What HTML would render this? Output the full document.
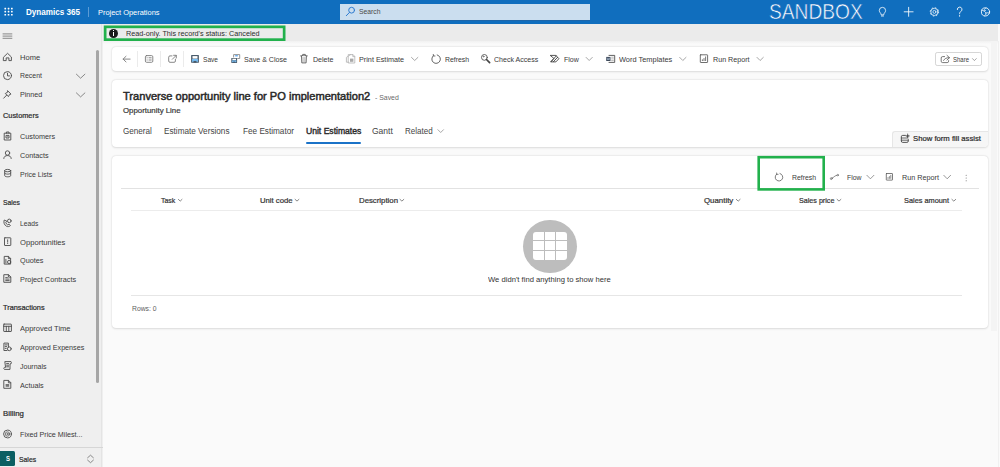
<!DOCTYPE html>
<html><head><meta charset="utf-8">
<style>
*{box-sizing:border-box;margin:0;padding:0}
html,body{width:1000px;height:467px;overflow:hidden;background:#fafafa;font-family:"Liberation Sans",sans-serif}
.t{position:absolute;white-space:nowrap;line-height:12px;transform-origin:0 0}
.a{position:absolute}
.card{position:absolute;background:#fff;border-radius:4px;box-shadow:0 0 1.6px rgba(0,0,0,.10),0 0.9px 2.2px rgba(0,0,0,.11)}
svg{position:absolute;overflow:visible}
</style></head><body>
<!-- top bar -->
<div class="a" style="left:0;top:0;width:1000px;height:24.4px;background:#106ebe"></div>
<div class="a" style="left:88px;top:6.5px;width:1px;height:10.5px;background:#5b9bd5"></div>
<div class="a" style="left:339.8px;top:3.7px;width:250.3px;height:16.2px;background:#cbdeef;box-shadow:0 0.5px 0 #2b5f94"></div>
<!-- sidebar -->
<div class="a" style="left:0;top:24.4px;width:102.5px;height:443px;background:#efefef"></div>
<div class="a" style="left:96px;top:49.9px;width:3px;height:333.1px;background:#a6a6a6;border-radius:1.5px"></div>
<div class="a" style="left:101.3px;top:24.4px;width:1.2px;height:443px;background:linear-gradient(90deg,#ececec,#dcdcdc)"></div>
<div class="a" style="left:0;top:447px;width:102.5px;height:0.9px;background:#d6d6d6"></div>
<div class="a" style="left:0;top:451.3px;width:15px;height:14.4px;background:#0b5f62;border-radius:0 1.5px 1.5px 0"></div>
<!-- notification bar -->
<div class="a" style="left:102.5px;top:24.4px;width:895.8px;height:17px;background:#ebebeb"></div>
<div class="a" style="left:102.5px;top:41.4px;width:895.8px;height:3px;background:linear-gradient(#f1f1f1,#fafafa)"></div>
<div class="a" style="left:109px;top:28.5px;width:9px;height:9px;border-radius:50%;background:#1b1b1b"></div>
<div class="a" style="left:113px;top:30.3px;width:1px;height:1.1px;background:#fff"></div>
<div class="a" style="left:113px;top:32.2px;width:1px;height:3.6px;background:#fff"></div>
<!-- right strip -->
<div class="a" style="left:990.5px;top:41.4px;width:6.5px;height:290px;background:#f4f4f4"></div>
<div class="a" style="left:998px;top:41.4px;width:0.8px;height:426px;background:#f0f0f0"></div>
<!-- cards -->
<div class="card" style="left:111.6px;top:46.9px;width:876.4px;height:24.1px"></div>
<div class="card" style="left:111.6px;top:80.2px;width:876.4px;height:66.8px"></div>
<div class="card" style="left:111.6px;top:155.8px;width:876.4px;height:172.6px"></div>
<!-- command bar separators -->
<div class="a" style="left:137px;top:50.8px;width:0.8px;height:16.2px;background:#ebebeb"></div>
<div class="a" style="left:160.3px;top:50.8px;width:0.8px;height:16.2px;background:#ebebeb"></div>
<div class="a" style="left:183.4px;top:50.8px;width:0.8px;height:16.2px;background:#ebebeb"></div>
<!-- share button -->
<div class="a" style="left:935.2px;top:52px;width:47px;height:13.8px;border:0.8px solid #d6d6d6;border-radius:2.2px;background:#fff"></div>
<!-- tab underline -->
<div class="a" style="left:306.1px;top:142.3px;width:55.3px;height:1.7px;background:#1a72c7;border-radius:1px"></div>
<!-- form fill assist button -->
<div class="a" style="left:892px;top:130.6px;width:96px;height:16.2px;background:#f6f6f6;border:0.8px solid #e6e6e6;border-right:none;border-bottom:none;border-radius:3px 0 4px 0"></div>
<!-- grid lines -->
<div class="a" style="left:121.3px;top:188.1px;width:857.3px;height:0.9px;background:#e2e2e2"></div>
<div class="a" style="left:131.3px;top:210.1px;width:830.7px;height:0.9px;background:#ececec"></div>
<div class="a" style="left:131.3px;top:295px;width:830.7px;height:0.9px;background:#e6e6e6"></div>
<!-- refresh highlight -->

<!-- empty state -->
<div class="a" style="left:523.2px;top:220px;width:53.4px;height:53.4px;border-radius:50%;background:#bdbdbd"></div>
<div class="a" style="left:532.7px;top:231.8px;width:34.6px;height:28.3px;border-radius:3px;background:#fff"></div>
<div class="a" style="left:543.6px;top:231.8px;width:1px;height:28.3px;background:#bdbdbd"></div>
<div class="a" style="left:555.4px;top:231.8px;width:1px;height:28.3px;background:#bdbdbd"></div>
<div class="a" style="left:532.7px;top:240.4px;width:34.6px;height:1px;background:#bdbdbd"></div>
<div class="a" style="left:532.7px;top:249.7px;width:34.6px;height:1px;background:#bdbdbd"></div>
<svg width="1000" height="467" style="left:0;top:0"><rect x="105.15" y="26.85" width="179" height="12.8" fill="none" stroke="#22b14c" stroke-width="2.7"/><rect x="758.7" y="157.2" width="65" height="32.2" fill="none" stroke="#22b14c" stroke-width="2.6"/></svg>

<svg width="1000" height="467" viewBox="0 0 1000 467" style="left:0;top:0" fill="none" stroke-linecap="round" stroke-linejoin="round">
<!-- ===== top bar ===== -->
<g fill="#fff" stroke="none">
 <rect x="4.4" y="7.7" width="1.7" height="1.7" rx=".4"/><rect x="7.7" y="7.7" width="1.7" height="1.7" rx=".4"/><rect x="11" y="7.7" width="1.7" height="1.7" rx=".4"/>
 <rect x="4.4" y="10.8" width="1.7" height="1.7" rx=".4"/><rect x="7.7" y="10.8" width="1.7" height="1.7" rx=".4"/><rect x="11" y="10.8" width="1.7" height="1.7" rx=".4"/>
 <rect x="4.4" y="13.9" width="1.7" height="1.7" rx=".4"/><rect x="7.7" y="13.9" width="1.7" height="1.7" rx=".4"/><rect x="11" y="13.9" width="1.7" height="1.7" rx=".4"/>
</g>
<!-- search magnifier -->
<g stroke="#2f7cd0" stroke-width="1">
 <circle cx="351.6" cy="10.2" r="2.9"/><path d="M349.4 12.5 L346.3 15.7"/>
</g>
<g stroke="#fff" stroke-width="0.85">
 <!-- lightbulb -->
 <path d="M881.2 14.5 C881.2 13.1 879.3 12.5 879.3 10.5 A3.15 3.15 0 0 1 885.6 10.5 C885.6 12.5 883.7 13.1 883.7 14.5 Z" stroke-width=".8"/>
 <path d="M881.4 16 H883.5" stroke-width=".8"/>
 <!-- plus -->
 <path d="M904.2 11.8 H913.1 M908.65 7.3 V16.3"/>
 <!-- gear -->
 <circle cx="934.4" cy="11.9" r="3.6" stroke-width="0.75"/>
 <circle cx="934.4" cy="11.9" r="4.2" stroke-width="0.8" stroke-dasharray="1.5 1.8" stroke-linecap="butt"/>
 <circle cx="934.4" cy="11.9" r="1.5" stroke-width="0.7"/>
 <!-- question -->
 <path d="M957.3 9.6 A2.35 2.35 0 1 1 960.6 11.6 C959.8 12.2 959.6 12.7 959.6 13.8"/>
 <path d="M959.6 15.6 V16.2" stroke-width="1"/>
 <!-- copilot-ish -->
 <circle cx="985.5" cy="11.9" r="4.1"/>
 <path d="M985.9 7.9 C983.6 9.6 983.6 11 985.1 12 C986.8 13.2 986.4 14.6 984.6 15.9 M982 10.3 C983.4 11.2 984.6 11.2 985.6 10.6 M989.3 13.2 C987.8 12.4 986.6 12.6 985.7 13.2" stroke-width="0.7"/>
</g>
<!-- ===== sidebar ===== -->
<g stroke="#666" stroke-width="0.75">
 <path d="M3 33.9 H11.9 M3 36.1 H11.9 M3 38.3 H11.9"/>
</g>
<g stroke="#4d4d4d" stroke-width="0.92">
 <!-- home -->
 <path d="M3.7 57 L7.55 53.3 L11.4 57 V60.6 H8.9 V57.9 H6.2 V60.6 H3.7 Z"/>
 <!-- recent clock -->
 <circle cx="7.5" cy="75.6" r="4"/><path d="M7.5 73.2 V75.9 H9.5"/>
 <!-- pin -->
 <path d="M7.8 90.9 L11 94.1 L9.6 94.5 L8.4 96.6 L5.3 93.5 L7.4 92.3 Z M6.7 95.1 L3.7 98.2"/>
 <!-- chevrons -->
 <path d="M76.4 74.2 L80.6 78.2 L84.9 74.2" stroke="#666" stroke-width="0.75"/>
 <path d="M76.4 92.9 L80.6 96.9 L84.9 92.9" stroke="#666" stroke-width="0.75"/>
 <!-- customers (clipboard/building) -->
 <path d="M4.6 133.2 H10.8 V140 H4.6 Z M6.4 133.2 V132 H9 V133.2"/><rect x="6.4" y="135.4" width="2.6" height="2.6"/><path d="M7.7 136.7 h.1"/>
 <!-- contacts -->
 <circle cx="7.5" cy="153" r="2.2"/><path d="M3.8 158.5 C4 156.3 5.5 155.6 7.5 155.6 C9.5 155.6 11 156.3 11.2 158.5"/>
 <!-- price lists (db cylinder) -->
 <ellipse cx="7.7" cy="170.6" rx="3" ry="1.2"/><path d="M4.7 170.6 V175.6 C4.7 177.2 10.7 177.2 10.7 175.6 V170.6 M4.7 173.1 C4.7 174.6 10.7 174.6 10.7 173.1"/>
 <!-- leads -->
 <circle cx="9.3" cy="220.9" r="1.8"/><path d="M4.1 220.4 C3.3 222.6 4.4 225.1 6.6 226.3 C7.8 226.9 9.4 226.6 10.4 225.6 L9 224.1 L7.7 224.9 C6.7 224.4 6 223.5 5.8 222.5 L6.6 221.5 Z"/>
 <!-- opportunities -->
 <rect x="4.5" y="237.8" width="6.3" height="7.7" rx=".4"/><path d="M7.65 239.8 V242.2 M7.65 243.4 v.1"/>
 <!-- quotes -->
 <path d="M4.6 256.4 H8.6 L10.6 258.4 V264.1 H4.6 Z M8.4 256.6 V258.6 H10.4"/><circle cx="9.1" cy="262" r="1.6"/><path d="M5.9 259.3 V263"/>
 <!-- project contracts -->
 <path d="M4.2 274.7 H8.6 L10.8 276.9 V282.3 H4.2 Z M8.4 274.9 V277.1 H10.6 M5.7 277.6 H7.4 M5.7 279.1 H9.2 M5.7 280.6 H9.2"/>
 <!-- approved time (calendar/table) -->
 <rect x="3.7" y="324.1" width="7.7" height="7.4" rx=".4"/><path d="M3.7 326.3 H11.4 M6.3 326.3 V331.5 M8.8 326.3 V331.5"/>
 <!-- approved expenses -->
 <path d="M8.4 347 V343.1 H3.9 V350.5 H7"/><path d="M5.2 344.9 H7.2 M5.2 346.6 H6.6 M5.2 348.4 H6.2"/><circle cx="9.3" cy="348.8" r="1.9"/>
 <!-- journals -->
 <path d="M5.2 361.6 H11 C11.6 362.3 11.6 363.3 11 363.8 H10 V369.4 H4.4 C3.6 368.9 3.6 368 4.4 367.4 H5.2 Z M6.6 363.6 H8.6 M6.6 365.2 H8.6 M6.6 366.8 H8.6"/>
 <!-- actuals -->
 <path d="M4.2 380.4 H8.6 L10.8 382.6 V388.3 H4.2 Z M8.4 380.6 V382.8 H10.6"/><rect x="5.6" y="384" width="3.6" height="2.8" fill="#777" stroke="none"/>
 <!-- fixed price (target) -->
 <circle cx="7.5" cy="434" r="3.9"/><circle cx="7.5" cy="434" r="2.2" stroke-width=".7"/><circle cx="7.5" cy="434" r=".7" stroke-width=".7"/>
 <!-- area switcher chevrons -->
 <path d="M87.6 457.8 L90.5 455.2 L93.4 457.8 M87.6 460.1 L90.5 462.7 L93.4 460.1" stroke="#666" stroke-width=".75"/>
</g>
<!-- ===== command bar ===== -->
<g stroke="#7a7a7a" stroke-width="0.9">
 <path d="M130.1 59.1 H123.1 M126 56.3 L123.1 59.1 L126 61.9"/>
 <rect x="145.4" y="55.6" width="7.4" height="6.7" rx="1.2"/><path d="M149 57.8 H151.2 M149 60 H151.2 M147 57.8 h.2 M147 60 h.2"/>
 <path d="M172 55.9 H170 A1.3 1.3 0 0 0 168.7 57.2 V61 A1.3 1.3 0 0 0 170 62.3 H174.1 A1.3 1.3 0 0 0 175.4 61 V59.2 M173.6 55.3 H176.3 V58 M176.2 55.4 L172.3 59.3"/>
</g>
<!-- save -->
<g>
 <rect x="191.1" y="55.1" width="7.8" height="7.7" rx=".5" fill="#4a5b6b"/>
 <rect x="192.5" y="56.1" width="5" height="2.5" fill="#fff"/>
 <rect x="192.1" y="59" width="5.8" height="2.9" fill="#78bff5"/>
 <rect x="193.5" y="60.9" width="3" height="1.9" fill="#4a5b6b"/>
 <!-- save & close -->
 <path d="M233.6 57 V54.6 H239.7 V58.5 H237.8" stroke="#7a7a7a" stroke-width="0.8"/>
 <rect x="235.2" y="55.2" width="2.6" height="1.2" fill="#4a9be8"/>
 <rect x="231.3" y="58" width="5.8" height="4.9" rx=".4" fill="#4a5b6b"/>
 <rect x="232.4" y="58.7" width="3.6" height="1.4" fill="#fff"/>
 <rect x="232.1" y="60.4" width="4.2" height="1.8" fill="#78bff5"/>
 <rect x="233.2" y="61.6" width="2" height="1.3" fill="#4a5b6b"/>
</g>
<!-- delete -->
<g stroke="#555" stroke-width="0.85">
 <path d="M300.6 55.9 H307.3 M302.7 55.7 V54.4 H305.3 V55.7"/>
 <path d="M301.5 56.1 L301.8 62.9 H306.1 L306.4 56.1" fill="#f2f2f2"/>
 <path d="M303.1 57.5 V61.6 M304.8 57.5 V61.6" stroke="#999" stroke-width=".6"/>
</g>
<!-- print estimate (disabled look) -->
<g stroke="#b5b5b5" stroke-width="0.85">
 <path d="M348.6 54.6 H353 L354.8 56.4 V63 H348.6 Z M352.8 54.8 V56.6 H354.6"/>
 <path d="M350.6 54.6 L346.4 57.4 V62.2 H348.6"/>
 <rect x="350" y="58.6" width="3.4" height="3.2" fill="#a9a9a9" stroke="none"/>
</g>
<!-- refresh -->
<g stroke="#555" stroke-width="0.9">
 <path d="M437.2 54.9 A4.3 4.3 0 1 1 433.4 55.7"/><path d="M433.3 54.4 L433.4 56 L435 56" stroke-width=".8"/>
</g>
<!-- check access (key) -->
<g stroke="#555" stroke-width="0.9">
 <circle cx="484.4" cy="57.4" r="2.9"/><path d="M486.5 59.5 L489.6 62.6" stroke-width="1.7" stroke="#444"/><circle cx="483.6" cy="56.6" r=".5" stroke-width=".6"/>
</g>
<!-- flow -->
<g stroke="#3a3a3a" stroke-width="0.85">
 <path d="M550.6 55.4 H555.9 L558.9 58.7 L555.9 61.9 H550.6 L553.6 58.7 Z M553.4 61.7 L557.6 57.3 M551.2 61.7 L556.3 55.8"/>
</g>
<!-- word templates -->
<g stroke="#444" stroke-width="0.85">
 <path d="M609 55.4 H614.7 V62.4 H609"/><path d="M611.6 57.2 H613.4 M611.6 58.9 H613.4 M611.6 60.6 H613.4" stroke="#888" stroke-width=".6"/>
 <rect x="606.2" y="56.9" width="4.3" height="4.1" fill="#3f4b5c" stroke="none"/><path d="M607.2 58.1 L607.8 59.9 L608.4 58.5 L609 59.9 L609.6 58.1" stroke="#cfe3f7" stroke-width=".5"/>
</g>
<!-- run report -->
<g stroke="#555" stroke-width="0.85">
 <rect x="700.3" y="54.8" width="7.3" height="7.7" rx=".4"/><path d="M702.4 59.4 V61 M704 58.1 V61 M705.6 56.5 V61" stroke-width=".8" stroke-linecap="butt"/>
</g>
<!-- chevrons cmdbar -->
<g stroke="#8a8a8a" stroke-width="0.75">
 <path d="M411.5 57.4 L414.7 60.5 L417.9 57.4"/>
 <path d="M586.1 57.4 L589.2 60.5 L592.3 57.4"/>
 <path d="M679.7 57.4 L682.8 60.5 L686 57.4"/>
 <path d="M757 57.4 L760.1 60.5 L763.3 57.4"/>
 <path d="M972.5 58.6 L974.4 60.6 L976.3 58.6" stroke="#777" stroke-width=".65"/>
</g>
<!-- share icon -->
<g stroke="#555" stroke-width="0.8">
 <path d="M944.6 56.6 H942.6 A1.4 1.4 0 0 0 941.2 58 V61.2 A1.4 1.4 0 0 0 942.6 62.6 H947.2 A1.4 1.4 0 0 0 948.6 61.2 V60.6"/>
 <path d="M947 55.4 L949.5 57.7 L947 60 M949.3 57.7 C946.4 57.5 944.6 58.6 943.6 60.4"/>
</g>
<!-- related chevron -->
<path d="M437.9 129.7 L440.7 132.5 L443.5 129.7" stroke="#8a8a8a" stroke-width=".75"/>
<!-- form fill assist icon -->
<g stroke="#3a3a3a" stroke-width="0.85">
 <path d="M905.4 135.4 H902.7 A1.4 1.4 0 0 0 901.3 136.8 V141 A1.4 1.4 0 0 0 902.7 142.4 H906.9 A1.4 1.4 0 0 0 908.3 141 V139.6"/>
 <path d="M901.5 138 H908 M901.5 140.2 H908" stroke-width=".75"/>
 <path d="M907.7 133.9 L908.2 135.4 L909.7 135.9 L908.2 136.4 L907.7 137.9 L907.2 136.4 L905.7 135.9 L907.2 135.4 Z" fill="#3a3a3a" stroke-width=".3"/>
</g>
<!-- ===== grid toolbar ===== -->
<g stroke="#5a5a5a" stroke-width="0.8">
 <path d="M780 173.5 A3.8 3.8 0 1 1 776.7 174.1"/><path d="M776.6 173 L776.7 174.4 L778.1 174.4" stroke-width=".7"/>
 <circle cx="831.3" cy="178.6" r=".95" stroke-width=".65"/><path d="M832.2 178 C834 177.6 834.2 175.8 836.6 175.4" stroke-width=".7"/><circle cx="837.7" cy="175.1" r=".75" stroke-width=".6"/>
 <rect x="886.3" y="173.5" width="6.2" height="6.6" rx=".3"/><path d="M888 177.2 V178.8 M889.4 176.2 V178.8 M890.8 174.9 V178.8" stroke-width=".7" stroke-linecap="butt"/>
 <path d="M866.9 175.3 L870.4 178.8 L873.9 175.3" stroke="#777" stroke-width=".75"/>
 <path d="M943.8 175.3 L947.2 178.8 L950.6 175.3" stroke="#777" stroke-width=".75"/>
</g>
<g fill="#777" stroke="none"><circle cx="966.2" cy="175.2" r=".55"/><circle cx="966.2" cy="178" r=".55"/><circle cx="966.2" cy="180.8" r=".55"/></g>
<!-- header sort chevrons -->
<g stroke="#555" stroke-width=".7">
 <path d="M178.4 199.4 L180.2 201.1 L182 199.4"/>
 <path d="M295.1 199.4 L297 201.1 L298.9 199.4"/>
 <path d="M400 199.4 L401.9 201.1 L403.8 199.4"/>
 <path d="M736.3 199.4 L738.2 201.1 L740.1 199.4"/>
 <path d="M837.1 199.4 L839 201.1 L840.9 199.4"/>
 <path d="M951.9 199.4 L953.8 201.1 L955.7 199.4"/>
</g>
</svg>

<div class="t" style="left:25.80px;top:6.00px;font-size:8.5px;font-weight:bold;color:#fff;transform:scaleX(0.9541);">Dynamics 365</div>
<div class="t" style="left:97.80px;top:7.00px;font-size:7.5px;font-weight:normal;color:#fff;transform:scaleX(0.9899);">Project Operations</div>
<div class="t" style="left:358.50px;top:6.00px;font-size:7.5px;font-weight:normal;color:#4a4a4a;transform:scaleX(0.9047);">Search</div>
<div class="t" style="left:769.30px;top:6.00px;font-size:21.6px;font-weight:normal;color:#fff;transform:scaleX(0.8872);-webkit-text-stroke:0.55px #106ebe;">SANDBOX</div>
<div class="t" style="left:126.40px;top:28.00px;font-size:7.4px;font-weight:normal;color:#2b2b2b;transform:scaleX(0.9802);">Read-only. This record&#x27;s status: Canceled</div>
<div class="t" style="left:203.10px;top:54.00px;font-size:7.5px;font-weight:normal;color:#3a3a3a;transform:scaleX(0.8767);">Save</div>
<div class="t" style="left:243.70px;top:54.00px;font-size:7.5px;font-weight:normal;color:#3a3a3a;transform:scaleX(0.9460);">Save &amp; Close</div>
<div class="t" style="left:312.60px;top:54.00px;font-size:7.5px;font-weight:normal;color:#3a3a3a;transform:scaleX(0.9406);">Delete</div>
<div class="t" style="left:358.70px;top:54.00px;font-size:7.5px;font-weight:normal;color:#3a3a3a;transform:scaleX(0.9660);">Print Estimate</div>
<div class="t" style="left:444.60px;top:54.00px;font-size:7.5px;font-weight:normal;color:#3a3a3a;transform:scaleX(0.9175);">Refresh</div>
<div class="t" style="left:493.80px;top:54.00px;font-size:7.5px;font-weight:normal;color:#3a3a3a;transform:scaleX(0.9382);">Check Access</div>
<div class="t" style="left:563.50px;top:54.00px;font-size:7.5px;font-weight:normal;color:#3a3a3a;transform:scaleX(0.9341);">Flow</div>
<div class="t" style="left:618.70px;top:54.00px;font-size:7.5px;font-weight:normal;color:#3a3a3a;transform:scaleX(0.9885);">Word Templates</div>
<div class="t" style="left:712.60px;top:54.00px;font-size:7.5px;font-weight:normal;color:#3a3a3a;transform:scaleX(0.9541);">Run Report</div>
<div class="t" style="left:952.80px;top:54.00px;font-size:6.9px;font-weight:normal;color:#3a3a3a;transform:scaleX(0.8700);">Share</div>
<div class="t" style="left:123.30px;top:90.00px;font-size:10.9px;font-weight:normal;color:#2a2a2a;transform:scaleX(1.0179);-webkit-text-stroke:0.49px #2a2a2a;">Tranverse opportunity line for PO implementation2</div>
<div class="t" style="left:375.10px;top:92.00px;font-size:7.3px;font-weight:normal;color:#6a6a6a;transform:scaleX(0.9461);">- Saved</div>
<div class="t" style="left:123.00px;top:105.00px;font-size:7.3px;font-weight:normal;color:#3a3a3a;transform:scaleX(1.0757);-webkit-text-stroke:0.2px #3a3a3a;">Opportunity Line</div>
<div class="t" style="left:123.30px;top:125.00px;font-size:8.4px;font-weight:normal;color:#444;transform:scaleX(0.9699);">General</div>
<div class="t" style="left:164.40px;top:125.00px;font-size:8.4px;font-weight:normal;color:#444;transform:scaleX(0.9772);">Estimate Versions</div>
<div class="t" style="left:242.70px;top:125.00px;font-size:8.4px;font-weight:normal;color:#444;transform:scaleX(0.9781);">Fee Estimator</div>
<div class="t" style="left:306.10px;top:125.00px;font-size:8.4px;font-weight:normal;color:#2a2a2a;transform:scaleX(1.0241);-webkit-text-stroke:0.38px #2a2a2a;">Unit Estimates</div>
<div class="t" style="left:372.40px;top:125.00px;font-size:8.4px;font-weight:normal;color:#444;transform:scaleX(1.0154);">Gantt</div>
<div class="t" style="left:404.70px;top:125.00px;font-size:8.4px;font-weight:normal;color:#444;transform:scaleX(0.9558);">Related</div>
<div class="t" style="left:913.20px;top:133.00px;font-size:7.3px;font-weight:normal;color:#2a2a2a;transform:scaleX(1.0545);-webkit-text-stroke:0.2px #2a2a2a;">Show form fill assist</div>
<div class="t" style="left:791.80px;top:172.00px;font-size:7.4px;font-weight:normal;color:#3a3a3a;transform:scaleX(0.9308);">Refresh</div>
<div class="t" style="left:847.10px;top:172.00px;font-size:7.4px;font-weight:normal;color:#3a3a3a;transform:scaleX(0.9289);">Flow</div>
<div class="t" style="left:901.80px;top:172.00px;font-size:7.4px;font-weight:normal;color:#3a3a3a;transform:scaleX(0.9789);">Run Report</div>
<div class="t" style="left:161.40px;top:195.00px;font-size:7.4px;font-weight:normal;color:#333;transform:scaleX(0.9406);-webkit-text-stroke:0.21px #333;">Task</div>
<div class="t" style="left:259.80px;top:195.00px;font-size:7.4px;font-weight:normal;color:#333;transform:scaleX(1.0437);-webkit-text-stroke:0.21px #333;">Unit code</div>
<div class="t" style="left:358.50px;top:195.00px;font-size:7.4px;font-weight:normal;color:#333;transform:scaleX(1.0549);-webkit-text-stroke:0.21px #333;">Description</div>
<div class="t" style="left:704.30px;top:195.00px;font-size:7.4px;font-weight:normal;color:#333;transform:scaleX(1.0642);-webkit-text-stroke:0.21px #333;">Quantity</div>
<div class="t" style="left:798.60px;top:195.00px;font-size:7.4px;font-weight:normal;color:#333;transform:scaleX(0.9682);-webkit-text-stroke:0.21px #333;">Sales price</div>
<div class="t" style="left:904.00px;top:195.00px;font-size:7.4px;font-weight:normal;color:#333;transform:scaleX(0.9955);-webkit-text-stroke:0.21px #333;">Sales amount</div>
<div class="t" style="left:488.30px;top:274.00px;font-size:7.3px;font-weight:normal;color:#333;transform:scaleX(1.0471);">We didn&#x27;t find anything to show here</div>
<div class="t" style="left:131.60px;top:303.00px;font-size:7.3px;font-weight:normal;color:#5e5e5e;transform:scaleX(0.9295);">Rows: 0</div>
<div class="t" style="left:19.70px;top:52.00px;font-size:7.5px;font-weight:normal;color:#3a3a3a;transform:scaleX(1.0042);">Home</div>
<div class="t" style="left:19.70px;top:70.00px;font-size:7.5px;font-weight:normal;color:#3a3a3a;transform:scaleX(0.9215);">Recent</div>
<div class="t" style="left:19.70px;top:89.00px;font-size:7.5px;font-weight:normal;color:#3a3a3a;transform:scaleX(0.9546);">Pinned</div>
<div class="t" style="left:19.70px;top:131.00px;font-size:7.5px;font-weight:normal;color:#3a3a3a;transform:scaleX(0.9679);">Customers</div>
<div class="t" style="left:19.70px;top:150.00px;font-size:7.5px;font-weight:normal;color:#3a3a3a;transform:scaleX(0.9659);">Contacts</div>
<div class="t" style="left:19.70px;top:169.00px;font-size:7.5px;font-weight:normal;color:#3a3a3a;transform:scaleX(0.9308);">Price Lists</div>
<div class="t" style="left:19.70px;top:218.00px;font-size:7.5px;font-weight:normal;color:#3a3a3a;transform:scaleX(0.8954);">Leads</div>
<div class="t" style="left:19.70px;top:237.00px;font-size:7.5px;font-weight:normal;color:#3a3a3a;transform:scaleX(1.0177);">Opportunities</div>
<div class="t" style="left:19.70px;top:255.00px;font-size:7.5px;font-weight:normal;color:#3a3a3a;transform:scaleX(0.9716);">Quotes</div>
<div class="t" style="left:19.70px;top:274.00px;font-size:7.5px;font-weight:normal;color:#3a3a3a;transform:scaleX(0.9769);">Project Contracts</div>
<div class="t" style="left:19.70px;top:323.00px;font-size:7.5px;font-weight:normal;color:#3a3a3a;transform:scaleX(1.0009);">Approved Time</div>
<div class="t" style="left:19.70px;top:342.00px;font-size:7.5px;font-weight:normal;color:#3a3a3a;transform:scaleX(0.9577);">Approved Expenses</div>
<div class="t" style="left:19.70px;top:361.00px;font-size:7.5px;font-weight:normal;color:#3a3a3a;transform:scaleX(0.9380);">Journals</div>
<div class="t" style="left:19.70px;top:380.00px;font-size:7.5px;font-weight:normal;color:#3a3a3a;transform:scaleX(0.9630);">Actuals</div>
<div class="t" style="left:19.70px;top:429.00px;font-size:7.5px;font-weight:normal;color:#3a3a3a;transform:scaleX(0.9551);">Fixed Price Milest...</div>
<div class="t" style="left:3.40px;top:110.00px;font-size:7.4px;font-weight:normal;color:#2a2a2a;transform:scaleX(0.9962);-webkit-text-stroke:0.21px #2a2a2a;">Customers</div>
<div class="t" style="left:3.40px;top:197.00px;font-size:7.4px;font-weight:normal;color:#2a2a2a;transform:scaleX(0.9081);-webkit-text-stroke:0.21px #2a2a2a;">Sales</div>
<div class="t" style="left:3.40px;top:302.00px;font-size:7.4px;font-weight:normal;color:#2a2a2a;transform:scaleX(0.9894);-webkit-text-stroke:0.21px #2a2a2a;">Transactions</div>
<div class="t" style="left:3.40px;top:408.00px;font-size:7.4px;font-weight:normal;color:#2a2a2a;transform:scaleX(1.0548);-webkit-text-stroke:0.21px #2a2a2a;">Billing</div>
<div class="t" style="left:18.80px;top:454.00px;font-size:7.5px;font-weight:normal;color:#2a2a2a;transform:scaleX(0.9112);-webkit-text-stroke:0.21px #2a2a2a;">Sales</div>
<div class="t" style="left:5.60px;top:453.00px;font-size:6.6px;font-weight:bold;color:#fff;transform:scaleX(0.9078);">S</div>
</body></html>
